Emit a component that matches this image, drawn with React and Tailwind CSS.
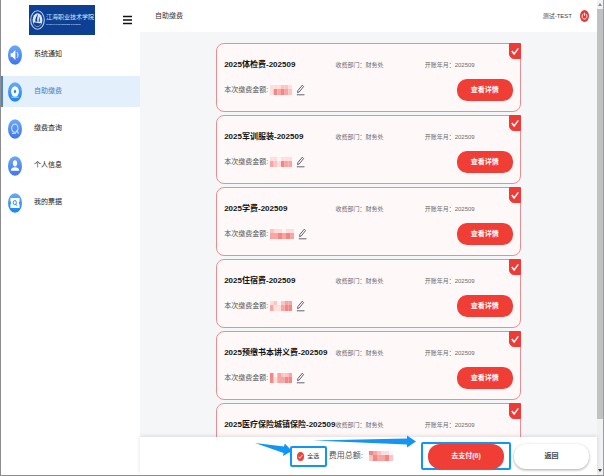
import React, { useState } from 'react';

const menuItems = [
  { id: 'notice', label: '系统通知' },
  { id: 'pay', label: '自助缴费' },
  { id: 'query', label: '缴费查询' },
  { id: 'profile', label: '个人信息' },
  { id: 'ticket', label: '我的票据' },
];

const bills = [
  { id: 1, title: '2025体检费-202509', mask: [1, 1, 1, 2, 2, 1, 1, 4, 3, 4, 3, 2], wide: false },
  { id: 2, title: '2025军训服装-202509', mask: [1, 1, 0, 1, 1, 1, 3, 2, 1, 4, 3, 3], wide: false },
  { id: 3, title: '2025学费-202509', mask: [2, 1, 1, 0, 1, 1, 3, 3, 4, 3, 4, 3], wide: true },
  { id: 4, title: '2025住宿费-202509', mask: [1, 2, 0, 2, 3, 3, 3, 1, 1, 3, 4, 4], wide: false },
  { id: 5, title: '2025预缴书本讲义费-202509', mask: [4, 0, 3, 2, 2, 3, 4, 1, 3, 3, 4, 4], wide: false },
  { id: 6, title: '2025医疗保险城镇保险-202509', mask: [1, 1, 2, 1, 2, 1, 3, 2, 3, 4, 3, 2], wide: false },
];

const shades = ['#fff5f5', '#fddedd', '#fbc5c4', '#f8a5a4', '#f18886'];

const MenuIcon = ({ id }) => (
  <svg viewBox="0 0 14 20" className="w-3.5 h-5 shrink-0" aria-hidden="true">
    <defs>
      <linearGradient id={`grad-${id}`} x1="0" y1="0" x2="0" y2="1">
        <stop offset="0" stopColor="#69aaf8" />
        <stop offset="1" stopColor={id === 'pay' || id === 'ticket' ? '#1687f0' : '#3f75ee'} />
      </linearGradient>
    </defs>
    <ellipse cx="7" cy="10" rx="7" ry="9.8" fill={`url(#grad-${id})`} />
    {id === 'notice' && (
      <g>
        <path d="M2.6 8.3h1.6L7.4 5v10L4.2 11.8H2.6z" fill="#fff" />
        <path d="M9 7.2c1.3 1.5 1.3 4.1 0 5.6" fill="none" stroke="#fff" />
      </g>
    )}
    {id === 'pay' && (
      <g>
        <ellipse cx="7" cy="9.5" rx="3.9" ry="5.2" fill="#fff" />
        <ellipse cx="7" cy="9.4" rx="1.2" ry="1.7" fill="#248df2" />
        <path d="M3.4 15.2h7.2" stroke="#b9dcff" />
      </g>
    )}
    {id === 'query' && (
      <g fill="none" stroke="#bfdcff" strokeWidth="1.2">
        <ellipse cx="6.8" cy="9.2" rx="3.2" ry="4" />
        <path d="M8.2 11.5l2.5 3M4 14.4h4" />
      </g>
    )}
    {id === 'profile' && (
      <g fill="#fff">
        <ellipse cx="7" cy="7.3" rx="2.1" ry="3.1" />
        <path d="M2.8 14.8c0-2.6 1.8-3.6 4.2-3.6s4.2 1 4.2 3.6z" />
      </g>
    )}
    {id === 'ticket' && (
      <g>
        <path d="M2.4 5h9.2v3.2c-1 .4-1 2.8 0 3.2V15H2.4v-3.6c1-.4 1-2.8 0-3.2z" fill="#fff" />
        <ellipse cx="6.8" cy="9.6" rx="1.6" ry="2.1" fill="none" stroke="#2d8df3" />
        <path d="M7.8 11.2l1.2 1.6" stroke="#2d8df3" />
      </g>
    )}
  </svg>
);

const Logo = () => (
  <div className="w-[66px] h-[30px] bg-[#0d3f93] flex items-center gap-px pl-px text-[#dbe6f8] overflow-hidden">
    <svg viewBox="0 0 15 20" className="w-[15px] h-5 shrink-0" aria-hidden="true">
      <ellipse cx="7.5" cy="10" rx="6.8" ry="9.2" fill="#0d3f93" stroke="#b9cdec" strokeWidth="1.1" />
      <ellipse cx="7.5" cy="10" rx="4.9" ry="6.8" fill="#dbe7f8" />
      <path d="M8.2 3.8c-2 2.4-3 5-3 7.6l2.2.4c-.6-2.6 0-5.4.8-8z" fill="#0d3f93" />
      <path d="M8.8 6.2c1.3 2 1.6 4 1.2 5.6H8.4c.6-1.8.6-3.6.4-5.6z" fill="#3867b0" />
      <path d="M3.4 13c2.2-1.2 3.4.8 8 0-.9 2.2-2.2 3.3-3.9 3.3S4.3 15.2 3.4 13z" fill="#0d3f93" />
    </svg>
    <div className="whitespace-nowrap">
      <div className="text-[6px] leading-[9px] font-['Liberation_Serif','Noto_Sans_CJK_SC',serif]">江海职业技术学院</div>
      <div className="text-[2px] leading-[4px] font-bold">JIANGHAI POLYTECHNIC COLLEGE</div>
    </div>
  </div>
);

// Blurred-out amount, drawn as a small mosaic
const Mosaic = ({ cells, wide }) => (
  <svg
    viewBox="0 0 24 12"
    preserveAspectRatio="none"
    className={wide ? 'w-6 h-3' : 'w-[22px] h-3'}
    role="img"
    aria-label="金额已隐藏"
  >
    {cells.map((c, i) => (
      <rect key={i} x={(i % 6) * 4} y={i < 6 ? 1 : 5} width="4" height={i < 6 ? 4 : 6} fill={shades[c]} />
    ))}
  </svg>
);

const BillCard = ({ bill, checked, onToggle }) => (
  <article className="relative h-[69px] shrink-0 border border-[#e88f93] rounded-lg bg-[#fff8f8] px-[7px] pt-[11px]">
    <label className="absolute -top-px -right-px w-3 h-4 cursor-pointer">
      <input
        type="checkbox"
        checked={checked}
        onChange={onToggle}
        aria-label={`选择 ${bill.title}`}
        className="peer block appearance-none w-3 h-4 rounded-bl-[5px] border border-[#e88f93] checked:bg-[#ed3c38] checked:border-[#ed3c38]"
      />
      <svg viewBox="0 0 12 16" className="absolute inset-0 pointer-events-none" aria-hidden="true">
        <path d="M2.8 8l2.3 3L9.3 5.3" fill="none" stroke="#fff" strokeWidth="1.4" />
      </svg>
    </label>
    <div className="grid grid-cols-[111fr_89fr_88fr] items-center h-5 whitespace-nowrap">
      <h2 className="min-w-0 text-[8px] font-bold text-[#141414]">{bill.title}</h2>
      <span className="text-[6px] text-[#6f6b6b]">收费部门：财务处</span>
      <span className="text-[6px] text-[#6f6b6b]">开账年月：202509</span>
    </div>
    <div className="flex items-center justify-between mt-1">
      <div className="flex items-center gap-0.5">
        <span className="text-[7px] text-[#555]">本次缴费金额:</span>
        <Mosaic cells={bill.mask} wide={bill.wide} />
        <button type="button" aria-label="编辑金额" className="ml-0.5">
          <svg viewBox="0 0 9 12" className="w-[9px] h-3" fill="none" stroke="#50505c" strokeWidth="0.9" aria-hidden="true">
            <path d="M1.6 8.7l.3-2.3L6.3 1.2l1.3 1.3L3.3 7.9zM.8 10.8h7.7" />
          </svg>
        </button>
      </div>
      <button type="button" className="w-14 h-[22px] rounded-[10px] bg-[#f03e37] text-white text-[7px] font-bold">
        查看详情
      </button>
    </div>
  </article>
);

const App = () => {
  const [active, setActive] = useState('pay');
  const [selected, setSelected] = useState(bills.map((b) => b.id));

  const allSelected = selected.length === bills.length;

  const toggle = (id) => {
    setSelected(selected.includes(id) ? selected.filter((s) => s !== id) : [...selected, id]);
  };

  const toggleAll = () => {
    setSelected(allSelected ? [] : bills.map((b) => b.id));
  };

  return (
    <div className="flex h-screen overflow-hidden bg-white border-l border-b border-[#8d8d91] text-[#333] font-['Liberation_Sans','Noto_Sans_CJK_SC',sans-serif]">
      {/* Sidebar */}
      <aside className="w-[139px] shrink-0">
        <div className="flex items-center justify-between h-[39px] pl-7 pr-2">
          <Logo />
          <button type="button" aria-label="折叠菜单">
            <svg viewBox="0 0 9 10" className="w-[9px] h-2.5" stroke="#111" strokeWidth="1.6" aria-hidden="true">
              <path d="M0 1.5h9M0 5h9M0 8.5h9" />
            </svg>
          </button>
        </div>
        <nav className="flex flex-col gap-1.5">
          {menuItems.map((item) => (
            <a
              key={item.id}
              href={`#${item.id}`}
              onClick={() => setActive(item.id)}
              className={`flex items-center gap-3 h-[31px] pl-[5px] border-l-2 text-[7px] ${
                active === item.id ? 'bg-[#e3f0fc] border-[#4a86d0] text-[#3f7cc4]' : 'border-transparent text-[#222]'
              }`}
            >
              <MenuIcon id={item.id} />
              {item.label}
            </a>
          ))}
        </nav>
      </aside>

      {/* Main */}
      <div className="flex flex-col flex-1 min-w-0 bg-[#f4f6f8]">
        <header className="flex items-center justify-between h-8 shrink-0 bg-white pl-[15px] pr-2">
          <h1 className="text-[7px]">自助缴费</h1>
          <div className="flex items-center gap-2">
            <span className="text-[6px] text-[#444]">测试-TEST</span>
            <button type="button" aria-label="退出">
              <svg viewBox="0 0 9 12" className="w-[9px] h-3" fill="none" stroke="#fff" strokeWidth="0.9" aria-hidden="true">
                <ellipse cx="4.5" cy="6" rx="4.5" ry="6" fill="#e13b38" stroke="none" />
                <path d="M3.3 3.8C1.4 5 1.7 9 4.5 9s3.1-4 1.2-5.2M4.5 2.7v3" />
              </svg>
            </button>
          </div>
        </header>

        <main className="flex-1 min-h-0 overflow-y-auto [scrollbar-width:none] pt-[11px]">
          <div className="flex flex-col gap-[3px] w-2/3 mx-auto">
            {bills.map((bill) => (
              <BillCard
                key={bill.id}
                bill={bill}
                checked={selected.includes(bill.id)}
                onToggle={() => toggle(bill.id)}
              />
            ))}
          </div>
        </main>

        <footer className="relative flex items-center justify-end h-[38px] shrink-0 bg-white pr-2 shadow-[0_-1px_4px_rgba(0,0,0,0.12)]">
          <div className="relative border-2 border-[#1296f3] rounded-[2px] h-[21px] w-[37px] flex items-center justify-center">
            <label className="flex items-center gap-[3px] text-[6px] cursor-pointer">
              <span className="relative block w-[7px] h-[9px]">
                <input
                  type="checkbox"
                  checked={allSelected}
                  onChange={toggleAll}
                  className="block appearance-none w-[7px] h-[9px] rounded-[50%] border border-[#e9463f] checked:bg-[#e9463f]"
                />
                <svg viewBox="0 0 7 9" className="absolute inset-0 pointer-events-none" aria-hidden="true">
                  <path d="M1.7 4.7l1.3 1.5L5.4 3" fill="none" stroke="#fff" strokeWidth="0.9" />
                </svg>
              </span>
              全选
            </label>
            <svg viewBox="0 0 38 14" className="absolute right-full -top-1.5 w-[38px] h-3.5" fill="#1296f3" aria-hidden="true">
              <path d="M1 1l29 3.5.8-3L38 9l-9 5 .6-3z" />
            </svg>
            <svg viewBox="0 0 104 14" className="absolute left-5 -top-3.5 w-[104px] h-3.5" fill="#1296f3" aria-hidden="true">
              <path d="M1 6.500L95 4.500V1.500l9 6-9 6v-3z" />
            </svg>
          </div>
          <div className="flex items-center gap-1.5 ml-0.5 mr-7">
            <span className="text-[8px] text-[#555]">费用总额:</span>
            <Mosaic cells={[4, 3, 2, 1, 1, 0, 2, 4, 3, 3, 4, 2]} wide />
          </div>
          <div className="flex items-center justify-center w-[90px] h-7 border-2 border-[#1296f3] rounded-[2px]">
            <button type="button" className="w-[76px] h-[25px] rounded-xl bg-[#f03e37] text-white text-[7px] font-bold">
              {`去支付(${selected.length})`}
            </button>
          </div>
          <button
            type="button"
            className="ml-[3px] w-[75px] h-[25px] rounded-xl bg-white text-[7px] font-bold text-[#444] shadow-[0_1px_3px_rgba(0,0,0,0.35)]"
          >
            返回
          </button>
        </footer>
      </div>

      {/* Scrollbar */}
      <div className="flex flex-col items-center justify-between w-[7px] shrink-0 bg-[#f1f1f1] border-r border-[#8fa0b4] py-[3px]" aria-hidden="true">
        <svg viewBox="0 0 4 3" className="w-1 h-[3px]" fill="#888">
          <path d="M2 0l2 3H0z" />
        </svg>
        <div className="flex-1 w-full mt-[3px] mb-[50px] bg-[#c1c1c1]" />
        <svg viewBox="0 0 4 3" className="w-1 h-[3px]" fill="#444">
          <path d="M2 3l2-3H0z" />
        </svg>
      </div>
    </div>
  );
};

export default App;
